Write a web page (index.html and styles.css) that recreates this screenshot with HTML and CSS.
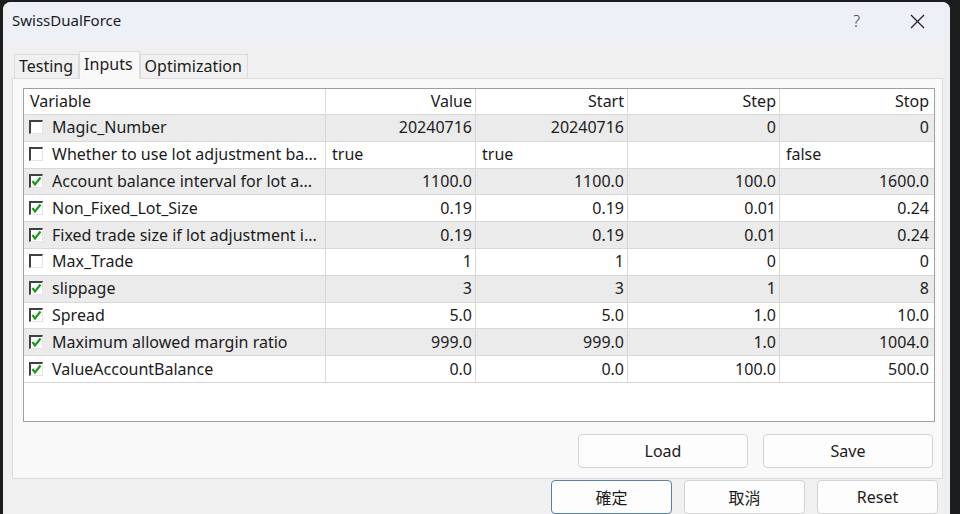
FILE: index.html
```html
<!DOCTYPE html>
<html>
<head>
<meta charset="utf-8">
<link rel="stylesheet" href="styles.css">
</head>
<body>
<div class="window">
  <div class="titlebar">
    <span class="title">SwissDualForce</span>
    <span class="help">?</span>
    <span class="close"><svg width="15" height="15" viewBox="0 0 15 15"><path d="M1 1 L14 14 M14 1 L1 14" stroke="#222" stroke-width="1.3" fill="none"/></svg></span>
  </div>
  <div class="body">
    <div class="tabs">
      <div class="tab">Testing</div>
      <div class="tab active">Inputs</div>
      <div class="tab">Optimization</div>
    </div>
    <div class="panel">
      <div class="table">
        <div class="row head">
          <div class="cell left">Variable</div>
          <div class="cell">Value</div>
          <div class="cell">Start</div>
          <div class="cell">Step</div>
          <div class="cell">Stop</div>
        </div>
        <div class="row alt">
          <div class="cell left"><span class="cb"></span>Magic_Number</div>
          <div class="cell">20240716</div>
          <div class="cell">20240716</div>
          <div class="cell">0</div>
          <div class="cell">0</div>
        </div>
        <div class="row">
          <div class="cell left"><span class="cb"></span>Whether to use lot adjustment ba...</div>
          <div class="cell left">true</div>
          <div class="cell left">true</div>
          <div class="cell"></div>
          <div class="cell left">false</div>
        </div>
        <div class="row alt">
          <div class="cell left"><span class="cb on"><svg viewBox="0 0 11 11"><path d="M1.5 5 L4 8.5 L9.5 1.5" stroke="#1a9a1a" stroke-width="2.2" fill="none"/></svg></span>Account balance interval for lot a...</div>
          <div class="cell">1100.0</div>
          <div class="cell">1100.0</div>
          <div class="cell">100.0</div>
          <div class="cell">1600.0</div>
        </div>
        <div class="row">
          <div class="cell left"><span class="cb on"><svg viewBox="0 0 11 11"><path d="M1.5 5 L4 8.5 L9.5 1.5" stroke="#1a9a1a" stroke-width="2.2" fill="none"/></svg></span>Non_Fixed_Lot_Size</div>
          <div class="cell">0.19</div>
          <div class="cell">0.19</div>
          <div class="cell">0.01</div>
          <div class="cell">0.24</div>
        </div>
        <div class="row alt">
          <div class="cell left"><span class="cb on"><svg viewBox="0 0 11 11"><path d="M1.5 5 L4 8.5 L9.5 1.5" stroke="#1a9a1a" stroke-width="2.2" fill="none"/></svg></span>Fixed trade size if lot adjustment i...</div>
          <div class="cell">0.19</div>
          <div class="cell">0.19</div>
          <div class="cell">0.01</div>
          <div class="cell">0.24</div>
        </div>
        <div class="row">
          <div class="cell left"><span class="cb"></span>Max_Trade</div>
          <div class="cell">1</div>
          <div class="cell">1</div>
          <div class="cell">0</div>
          <div class="cell">0</div>
        </div>
        <div class="row alt">
          <div class="cell left"><span class="cb on"><svg viewBox="0 0 11 11"><path d="M1.5 5 L4 8.5 L9.5 1.5" stroke="#1a9a1a" stroke-width="2.2" fill="none"/></svg></span>slippage</div>
          <div class="cell">3</div>
          <div class="cell">3</div>
          <div class="cell">1</div>
          <div class="cell">8</div>
        </div>
        <div class="row">
          <div class="cell left"><span class="cb on"><svg viewBox="0 0 11 11"><path d="M1.5 5 L4 8.5 L9.5 1.5" stroke="#1a9a1a" stroke-width="2.2" fill="none"/></svg></span>Spread</div>
          <div class="cell">5.0</div>
          <div class="cell">5.0</div>
          <div class="cell">1.0</div>
          <div class="cell">10.0</div>
        </div>
        <div class="row alt">
          <div class="cell left"><span class="cb on"><svg viewBox="0 0 11 11"><path d="M1.5 5 L4 8.5 L9.5 1.5" stroke="#1a9a1a" stroke-width="2.2" fill="none"/></svg></span>Maximum allowed margin ratio</div>
          <div class="cell">999.0</div>
          <div class="cell">999.0</div>
          <div class="cell">1.0</div>
          <div class="cell">1004.0</div>
        </div>
        <div class="row">
          <div class="cell left"><span class="cb on"><svg viewBox="0 0 11 11"><path d="M1.5 5 L4 8.5 L9.5 1.5" stroke="#1a9a1a" stroke-width="2.2" fill="none"/></svg></span>ValueAccountBalance</div>
          <div class="cell">0.0</div>
          <div class="cell">0.0</div>
          <div class="cell">100.0</div>
          <div class="cell">500.0</div>
        </div>
      </div>
      <div class="actions">
        <button class="btn wide">Load</button>
        <button class="btn wide">Save</button>
      </div>
    </div>
    <div class="footer">
      <button class="btn default">確定</button>
      <button class="btn">取消</button>
      <button class="btn">Reset</button>
    </div>
  </div>
</div>
</body>
</html>
```
FILE: styles.css
```css
* { box-sizing: border-box; }
html, body { margin: 0; padding: 0; }
body {
  background: #1b1d1f;
  width: 960px;
  height: 514px;
  overflow: hidden;
  font-family: "Segoe UI", "Noto Sans", "Noto Sans CJK TC", sans-serif;
  font-size: 16px;
  color: #1b1b1b;
}
.window {
  margin: 2px 0 0 3px;
  width: 947px;
  height: 512px;
  border-radius: 8px 8px 0 0;
  overflow: hidden;
  background: #f0f0f0;
}
.titlebar {
  height: 38px;
  background: #eef0f7;
  display: flex;
  align-items: center;
  padding-left: 9px;
}
.title { flex: 1; font-size: 15px; padding-bottom: 2px; }
.help { font-size: 16px; color: #333; margin-right: 50px; font-weight: 300; }
.close { display: flex; margin-right: 25px; }
.body { display: flex; flex-direction: column; }
.tabs {
  display: flex;
  align-items: flex-end;
  padding-left: 11px;
  margin-top: 11px;
  height: 27px;
  position: relative;
  z-index: 1;
}
.tab {
  height: 24px;
  padding: 0 5px 0 4px;
  border: 1px solid #dcdcdc;
  border-bottom: none;
  background: #f0f0f0;
  line-height: 22px;
  font-size: 16px;
}
.tab.active {
  height: 28px;
  background: #f9f9f9;
  line-height: 24px;
  margin-bottom: -1px;
  padding-bottom: 4px;
  padding-right: 6px;
  border-color: #dcdcdc;
}
.panel {
  margin-left: 9px;
  width: 931px;
  height: 401px;
  background: #f9f9f9;
  border: 1px solid #dcdcdc;
  padding: 9px 7px 0 10px;
  display: flex;
  flex-direction: column;
}
.table {
  height: 334px;
  border: 1px solid #a0a0a0;
  background: #fff;
}
.row {
  display: grid;
  grid-template-columns: 302px 150px 152px 152px 154px;
  height: 26.8px;
  border-bottom: 1px solid #d8d8d8;
}
.row.head { height: 26px; padding-bottom: 1px; }
.row.alt { background: #ebebeb; }
.cell {
  border-right: 1px solid #d8d8d8;
  display: flex;
  align-items: center;
  justify-content: flex-end;
  padding: 0 3px 1px 6px;
  white-space: nowrap;
  overflow: hidden;
}
.cell:last-child { border-right: none; padding-right: 5px; }
.cell.left { justify-content: flex-start; }
.cb {
  width: 14px;
  height: 14px;
  margin: 0 9px 0 -1px;
  background: #fff;
  border-top: 2px solid #404040;
  border-left: 2px solid #404040;
  border-right: 1px solid #e4e4e4;
  border-bottom: 1px solid #e4e4e4;
  display: flex;
  align-items: center;
  justify-content: center;
  flex: none;
}
.cb svg { width: 11px; height: 11px; }
.actions {
  display: flex;
  justify-content: flex-end;
  gap: 15px;
  margin-top: 12px;
  padding-right: 2px;
}
.btn {
  font-family: inherit;
  font-size: 16px;
  color: #1b1b1b;
  background: #fdfdfd;
  border: 1px solid #d3d3d3;
  border-radius: 4px;
  height: 34px;
  width: 121px;
  padding: 0;
}
.btn.wide { width: 170px; }
.btn.default { border-color: #5a7fa8; }
.footer {
  display: flex;
  justify-content: flex-end;
  gap: 12px;
  margin-top: 1px;
  padding-right: 12px;
}
```
